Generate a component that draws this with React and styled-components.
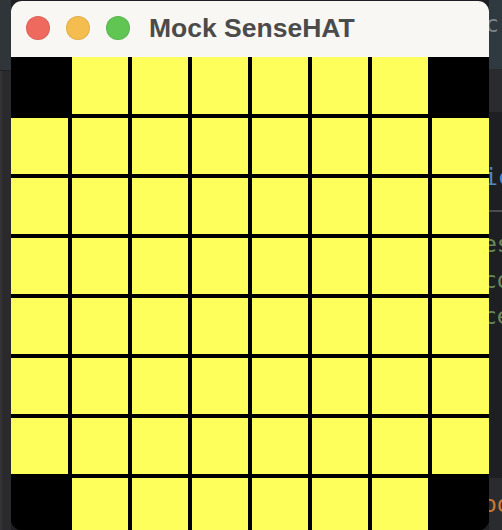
import React from "react";
import styled, { createGlobalStyle } from "styled-components";

const GlobalStyle = createGlobalStyle`
  html, body {
    margin: 0;
    padding: 0;
    background: #1e1f22;
    overflow: hidden;
  }
`;

// 8x8 LED matrix, corners are off
const pixels = Array.from({ length: 64 }, (_, i) => {
  const r = Math.floor(i / 8);
  const c = i % 8;
  const corner = (r === 0 || r === 7) && (c === 0 || c === 7);
  return !corner;
});

function App() {
  return (
    <>
      <GlobalStyle />
      <Desktop>
        <LeftGutter>
          <GutterTop />
          <GutterBody />
        </LeftGutter>
        <Window>
          <TitleBar>
            <Lights>
              <Light color="#ee6a5f" />
              <Light color="#f5bd4f" />
              <Light color="#61c554" />
            </Lights>
            <Title>Mock SenseHAT</Title>
          </TitleBar>
          <Matrix>
            {pixels.map((on, i) => (
              <Pixel key={i} on={on ? 1 : 0} />
            ))}
          </Matrix>
        </Window>
        <RightPane>
          <PaneTop>
            <Code color="#7d868b" shift={-4}>c</Code>
          </PaneTop>
          <PaneTabs />
          <Editor>
            <Code color="#4f86c8" shift={-5} style={{ marginTop: 47 }}>ic</Code>
            <Divider />
            <Code color="#6a8759" shift={-6}>es</Code>
            <Code color="#6a8759" shift={-6}>co</Code>
            <Code color="#6a8759" shift={-6}>ce</Code>
          </Editor>
          <PaneBottom>
            <Code color="#cc7832" shift={-6}>oo</Code>
          </PaneBottom>
        </RightPane>
      </Desktop>
    </>
  );
}

const Desktop = styled.div`
  display: flex;
  width: 502px;
  height: 530px;
  overflow: hidden;
`;

const LeftGutter = styled.div`
  width: 11px;
  display: flex;
  flex-direction: column;
`;

const GutterTop = styled.div`
  height: 70px;
  background: #2f3539;
  border-bottom: 1px solid #1f2022;
`;

const GutterBody = styled.div`
  flex: 1;
  background: #2a2a2d;
  border-left: 2px solid #333336;
`;

const Window = styled.div`
  width: 478px;
  height: 529px;
  margin-top: 1px;
  border-radius: 11px;
  overflow: hidden;
  display: flex;
  flex-direction: column;
  background: #000;
  flex-shrink: 0;
`;

const TitleBar = styled.div`
  height: 56px;
  flex-shrink: 0;
  box-sizing: border-box;
  padding: 0 0 3px 15px;
  display: flex;
  align-items: center;
  gap: 19px;
  background: #f8f7f4;
`;

const Lights = styled.div`
  display: flex;
  gap: 16px;
`;

const Light = styled.span`
  width: 24px;
  height: 24px;
  border-radius: 50%;
  background: ${(p) => p.color};
  box-shadow: inset 0 0 0 1px rgba(0, 0, 0, 0.08);
`;

const Title = styled.div`
  font-family: "Liberation Sans", Arial, sans-serif;
  font-weight: bold;
  font-size: 26.5px;
  line-height: 26px;
  color: #4b4b4b;
  padding-top: 1px;
`;

const Matrix = styled.div`
  display: grid;
  grid-template-columns: 57px repeat(6, 56px) 57px;
  grid-template-rows: 57px repeat(6, 56px) 57px;
  gap: 4px;
  background: #000;
`;

const Pixel = styled.div`
  background: ${(p) => (p.on ? "#ffff5c" : "#000")};
`;

const RightPane = styled.div`
  flex: 1;
  display: flex;
  flex-direction: column;
  overflow: hidden;
  background: #1e1f22;
`;

const PaneTop = styled.div`
  height: 69px;
  background: #2e3a40;
  padding-top: 6px;
  box-sizing: border-box;
`;

const PaneTabs = styled.div`
  height: 43px;
  background: #2a2b2e;
`;

const Editor = styled.div`
  flex: 1;
  display: flex;
  flex-direction: column;
`;

const Divider = styled.div`
  height: 2px;
  margin: 15px 0 14px;
  background: #4a4c50;
`;

const PaneBottom = styled.div`
  height: 52px;
  background: #2a2b2e;
  padding-top: 8px;
  box-sizing: border-box;
`;

const Code = styled.div`
  font-family: "DejaVu Sans Mono", "Liberation Mono", monospace;
  font-size: 23px;
  line-height: 36px;
  white-space: nowrap;
  color: ${(p) => p.color};
  margin-left: ${(p) => p.shift}px;
`;

export default App;
